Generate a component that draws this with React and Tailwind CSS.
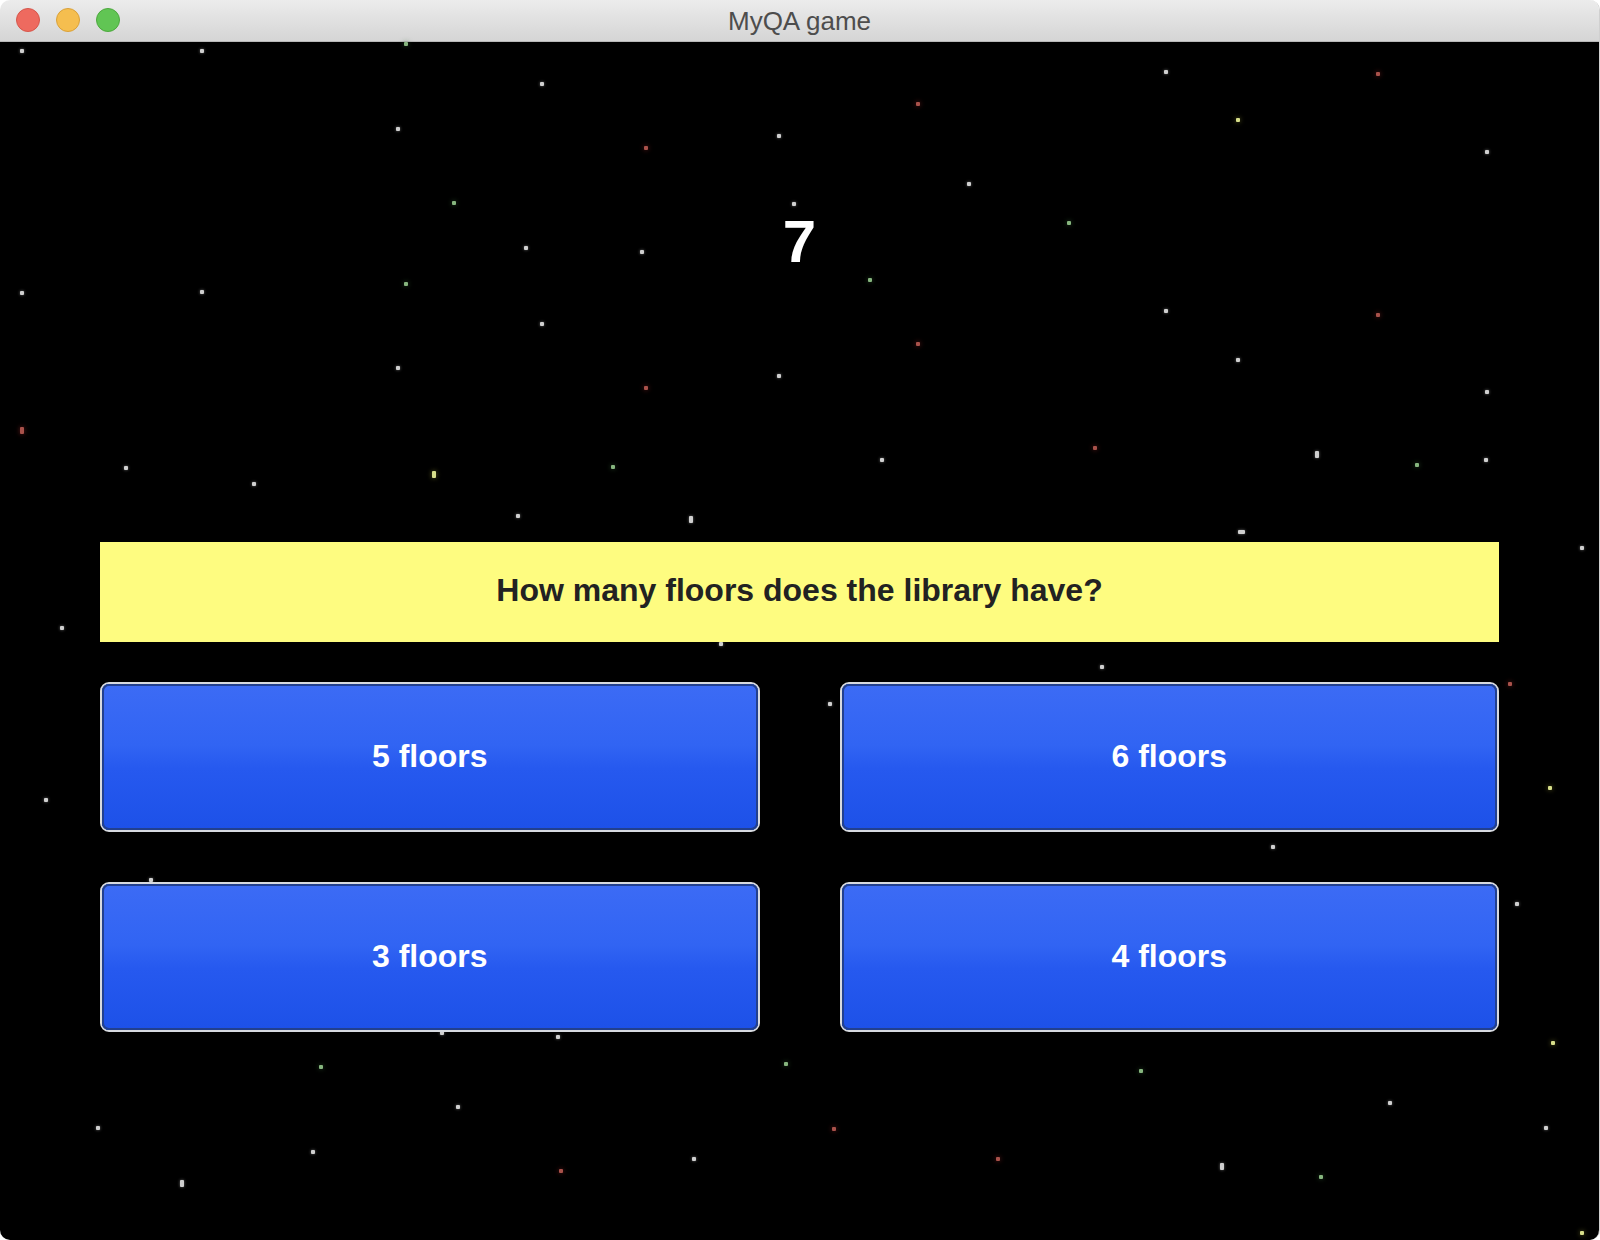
import React from 'react'

// star field: [x, y, tone, tall]
const STARS = [
  [22, 51, 'w'], [202, 51, 'w'], [406, 44, 'g'], [542, 84, 'w'], [398, 129, 'w'],
  [779, 136, 'w'], [646, 148, 'r'], [918, 104, 'r'], [1166, 72, 'w'], [1378, 74, 'r'],
  [1238, 120, 'y'], [1487, 152, 'w'], [969, 184, 'w'], [454, 203, 'g'], [1069, 223, 'g'],
  [526, 248, 'w'], [642, 252, 'w'], [794, 204, 'w'], [22, 293, 'w'], [202, 292, 'w'],
  [406, 284, 'g'], [870, 280, 'g'], [542, 324, 'w'], [1166, 311, 'w'], [1378, 315, 'r'],
  [918, 344, 'r'], [398, 368, 'w'], [779, 376, 'w'], [646, 388, 'r'], [1238, 360, 'w'],
  [1487, 392, 'w'], [22, 429, 'r', 1], [126, 468, 'w'], [254, 484, 'w'], [434, 473, 'y', 1],
  [613, 467, 'g'], [882, 460, 'w'], [1095, 448, 'r'], [1317, 453, 'w', 1], [1417, 465, 'g'],
  [1486, 460, 'w'], [518, 516, 'w'], [691, 518, 'w', 1], [1240, 532, 'w', 2], [1582, 548, 'w'],
  [62, 628, 'w'], [721, 644, 'w'], [1102, 667, 'w'], [830, 704, 'w'], [1510, 684, 'r'],
  [46, 800, 'w'], [1550, 788, 'y'], [1273, 847, 'w'], [151, 880, 'w'], [1517, 904, 'w'],
  [442, 1033, 'w'], [558, 1037, 'w'], [1553, 1043, 'y'], [321, 1067, 'g'], [786, 1064, 'g'],
  [1141, 1071, 'g'], [458, 1107, 'w'], [1390, 1103, 'w'], [98, 1128, 'w'], [834, 1129, 'r'],
  [1546, 1128, 'w'], [313, 1152, 'w'], [694, 1159, 'w'], [998, 1159, 'r'], [561, 1171, 'r'],
  [182, 1182, 'w', 1], [1222, 1165, 'w', 1], [1321, 1177, 'g'], [1582, 1233, 'y'],
]

const TONES = {
  w: 'bg-[#cfcfcf] shadow-[0_0_3px_rgba(200,200,200,0.55)]',
  r: 'bg-[#a8514a] shadow-[0_0_5px_rgba(150,40,40,0.7)]',
  g: 'bg-[#86b57e] shadow-[0_0_5px_rgba(60,110,60,0.7)]',
  y: 'bg-[#d7de8a] shadow-[0_0_5px_rgba(170,170,60,0.6)]',
}

function Star({ x, y, tone, tall }) {
  const size = tall === 2 ? 'w-[7px] h-[4px]' : tall ? 'w-[4px] h-[7px]' : 'w-[4px] h-[4px]'
  return (
    <span
      className={`absolute rounded-[1px] ${size} ${TONES[tone]}`}
      style={{ left: x - 2, top: y - 42 - 2 }}
    />
  )
}

function AnswerButton({ label }) {
  return (
    <button className="h-[150px] rounded-[9px] border-2 border-[#d7dae0] p-0 cursor-pointer">
      <div className="w-full h-full rounded-[7px] shadow-[inset_0_0_0_2px_#22408f] bg-[linear-gradient(to_bottom,#3c6bf5_0%,#3164f3_42%,#2659ef_58%,#1d51e8_100%)] flex items-center justify-center pb-[3px]">
        <span className="text-white text-[32px] font-bold leading-none font-['Liberation_Sans',Arial,sans-serif]">
          {label}
        </span>
      </div>
    </button>
  )
}

export default function App() {
  return (
    <div className="w-[1600px] h-[1240px] bg-white">
      <div className="w-full h-full flex flex-col rounded-[10px] overflow-hidden border-r border-[#d0d0d0]">
        {/* title bar */}
        <div className="relative h-[42px] shrink-0 bg-[linear-gradient(to_bottom,#ececec,#d5d5d5)] border-b border-[#b8b8b8] flex items-center justify-center">
          <div className="absolute left-[16px] top-[8px] flex gap-[16px]">
            <span className="w-[24px] h-[24px] rounded-full bg-[#ee6a5f] border border-[#d5574c]" />
            <span className="w-[24px] h-[24px] rounded-full bg-[#f5be4f] border border-[#d9a13a]" />
            <span className="w-[24px] h-[24px] rounded-full bg-[#61c554] border border-[#4da83e]" />
          </div>
          <span className="text-[26px] text-[#4d4d4d] font-['Liberation_Sans',Arial,sans-serif] leading-none">
            MyQA game
          </span>
        </div>

        {/* game area */}
        <div className="relative flex-1 bg-black">
          <div className="absolute inset-0">
            {STARS.map(([x, y, tone, tall], i) => (
              <Star key={i} x={x} y={y} tone={tone} tall={tall} />
            ))}
          </div>

          <div className="relative flex flex-col font-['Liberation_Sans',Arial,sans-serif]">
            <div className="pt-[170px] text-center text-white text-[60px] font-bold leading-none">7</div>

            <div className="mt-[270px] mx-[100px] h-[100px] bg-[#fefc80] flex items-center justify-center pb-[4px]">
              <span className="text-[32px] font-bold text-[#222222] leading-none">
                How many floors does the library have?
              </span>
            </div>

            <div className="mt-[40px] mx-[100px] grid grid-cols-2 gap-x-[80px] gap-y-[50px]">
              <AnswerButton label="5 floors" />
              <AnswerButton label="6 floors" />
              <AnswerButton label="3 floors" />
              <AnswerButton label="4 floors" />
            </div>
          </div>
        </div>
      </div>
    </div>
  )
}
